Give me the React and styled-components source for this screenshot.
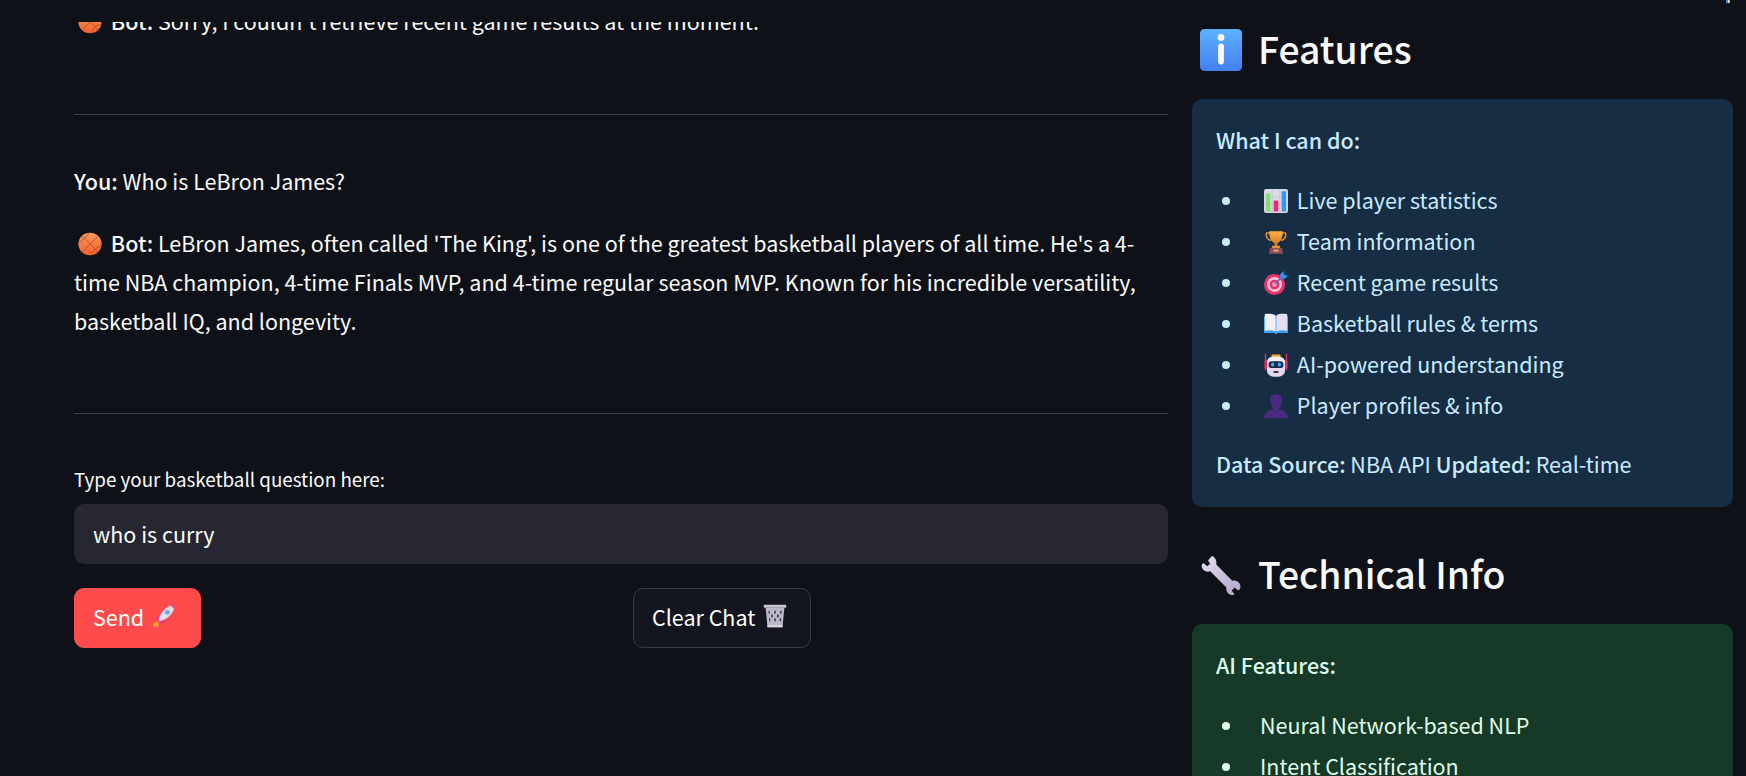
import React from "react";
import styled, { createGlobalStyle } from "styled-components";

const GlobalStyle = createGlobalStyle`
  html, body {
    margin: 0;
    height: 100%;
    overflow: hidden;
    background: #0e1117;
  }
  body {
    font-family: "Noto Sans CJK SC", "Noto Sans", sans-serif;
    color: #fafafa;
  }
`;

const Page = styled.div`
  position: relative;
  height: 776px;
  overflow: hidden;
  display: grid;
  grid-template-columns: 1094px 541px;
  column-gap: 24px;
  padding: 0 13px 0 74px;
  box-sizing: content-box;
  width: 1659px;
`;
const TopBar = styled.div`
  position: absolute;
  top: 0;
  left: 0;
  width: 1150px;
  height: 22px;
  background: #0e1117;
`;
const Decoration = styled.div`
  position: absolute;
  top: 0;
  left: 1726px;
  width: 4px;
  height: 3px;
  background: linear-gradient(90deg, #2f8fe0 0 50%, #fff0d0 50% 75%, #f2a63c 75%);
`;
const Main = styled.main`
  padding-top: 1px;
  display: flex;
  flex-direction: column;
`;
const Side = styled.aside`
  display: flex;
  flex-direction: column;
  padding-top: 20px;
`;
const Message = styled.p`
  margin: ${(p) => p.$top || 0}px 0 0;
  font-size: 21.5px;
  line-height: 39px;
  color: #fafafa;
  strong {
    font-weight: 500;
  }
`;
const Divider = styled.hr`
  width: 100%;
  height: 1px;
  border: 0;
  margin: ${(p) => p.$top}px 0 ${(p) => p.$bottom}px;
  background: #3d3f45;
`;
const Label = styled.label`
  display: block;
  font-size: 18.8px;
  line-height: 28px;
  margin-bottom: 11px;
  color: #fafafa;
`;
const Input = styled.input`
  display: block;
  width: 100%;
  box-sizing: border-box;
  height: 60px;
  padding: 0 19px 2px;
  border: 0;
  border-radius: 10px;
  outline: none;
  background: #262730;
  color: #fafafa;
  font: 21.5px "Noto Sans CJK SC", "Noto Sans", sans-serif;
`;
const ButtonRow = styled.div`
  display: grid;
  grid-template-columns: 1fr 1fr;
  column-gap: 24px;
  margin-top: 24px;
`;
const Button = styled.button`
  justify-self: start;
  display: inline-flex;
  align-items: center;
  gap: 8px;
  height: 60px;
  padding: 0 ${(p) => p.$right}px 4px 18px;
  border-radius: 10px;
  border: 1px solid ${(p) => (p.$primary ? "#ff4b4b" : "#393b43")};
  background: ${(p) => (p.$primary ? "#ff4b4b" : "#13161e")};
  color: #fff;
  font: 21.5px "Noto Sans CJK SC", "Noto Sans", sans-serif;
`;
const Heading = styled.h2`
  display: flex;
  align-items: center;
  gap: ${(p) => p.$gap}px;
  margin: 0 0 19px;
  height: 60px;
  padding-left: ${(p) => p.$pad}px;
  font-size: 37.3px;
  font-weight: 500;
  color: #fafafa;
`;
const HeadingText = styled.span`
  padding-bottom: 4px;
`;
const Panel = styled.section`
  box-sizing: border-box;
  border-radius: 10px;
  padding: 24px 24px 26px;
  margin-bottom: ${(p) => p.$bottom || 0}px;
  background: ${(p) => (p.$tone === "green" ? "#173928" : "#172d43")};
  color: ${(p) => (p.$tone === "green" ? "#dffde9" : "#c7ebff")};
  font-size: 21.5px;
  line-height: 34px;
  strong {
    font-weight: 500;
  }
`;
const PanelTitle = styled.div`
  font-weight: 500;
`;
const List = styled.ul`
  list-style: none;
  margin: 23.5px 0 20.5px;
  padding: 0 0 0 44px;
`;
const Item = styled.li`
  position: relative;
  height: 41px;
  line-height: 38px;
  &::before {
    content: "";
    position: absolute;
    left: -38px;
    top: 16px;
    width: 8px;
    height: 8px;
    border-radius: 50%;
    background: currentColor;
  }
`;
const Emoji = styled.svg`
  width: ${(p) => p.$size || 24}px;
  height: ${(p) => p.$size || 24}px;
  flex: none;
  vertical-align: ${(p) => p.$align || -4}px;
  margin: 0 ${(p) => p.$right || 0}px 0 ${(p) => p.$left || 0}px;
`;

const Icon = ({ children, ...rest }) => (
  <Emoji viewBox="0 0 32 32" aria-hidden="true" {...rest}>
    {children}
  </Emoji>
);

const Basketball = (props) => (
  <Icon {...props}>
    <defs>
      <linearGradient id="ball" x1="0" y1="0" x2="0" y2="1">
        <stop offset="0" stopColor="#f79a5c" />
        <stop offset="1" stopColor="#f4602a" />
      </linearGradient>
    </defs>
    <ellipse cx="16" cy="16" rx="15.5" ry="15" fill="url(#ball)" />
    <g fill="none" stroke="#a04c34" strokeWidth="1">
      <path d="M5 5.5C12 10 20 20 26.5 27" />
      <path d="M26.5 5C20 12 12 20 5.5 27" />
      <path d="M15 1C11 7 6 12 1.500 13" />
      <path d="M30.500 19C25 20 20 25 17 31" />
    </g>
  </Icon>
);

const InfoBox = (props) => (
  <Icon {...props}>
    <defs>
      <linearGradient id="info" x1="0" y1="0" x2="0" y2="1">
        <stop offset="0" stopColor="#5cb2ff" />
        <stop offset="1" stopColor="#437ff0" />
      </linearGradient>
    </defs>
    <rect x="0" y="0" width="32" height="32" rx="3.5" fill="url(#info)" />
    <circle cx="16" cy="6.5" r="2.6" fill="#fdf6ff" />
    <rect x="13.8" y="11" width="4.4" height="16" rx="2.2" fill="#fdf6ff" />
  </Icon>
);

const Wrench = (props) => (
  <Icon {...props}>
    <defs>
      <linearGradient id="wrench" x1="0" y1="0" x2="1" y2="1">
        <stop offset="0" stopColor="#e6dcf3" />
        <stop offset="1" stopColor="#b3a6c8" />
      </linearGradient>
    </defs>
    <path
      fill="url(#wrench)"
      d="M8.6 0.8 5.6 4.3 7.4 7 5 9 2.2 6.6C0.4 6.6 0.2 9.4 1.2 10.9 2.5 13 5.2 13.8 7.4 13L20.3 26C19.8 28.4 21 31 23.4 31.7 25 32.2 26.2 31.9 26.7 31.5L24.6 28.4 26.9 26 29.6 28.3C31.6 27.8 32 25 31.1 23.2 30 21 27.4 19.8 25 20.6L12.2 7.6C12.8 4.2 11 1.2 8.6 0.8Z"
    />
  </Icon>
);

const BarChart = (props) => (
  <Icon {...props}>
    <rect width="32" height="32" rx="3" fill="#dcdae6" />
    <path d="M11 0v32M21 0v32M0 11h32M0 21h32" stroke="#c3c0d0" strokeWidth="1" />
    <rect x="2.5" y="6" width="6" height="24" fill="#86e06f" />
    <rect x="13" y="15.5" width="6" height="14.5" fill="#f0286e" />
    <rect x="23.5" y="3" width="6" height="27" fill="#2f9af0" />
  </Icon>
);

const Trophy = (props) => (
  <Icon {...props}>
    <defs>
      <linearGradient id="cup" x1="0" y1="0" x2="0" y2="1">
        <stop offset="0" stopColor="#fbb23f" />
        <stop offset="1" stopColor="#d8701f" />
      </linearGradient>
    </defs>
    <path
      d="M8 4H3.5C2 9 4.5 13 9.5 14M24 4h4.5C30 9 27.5 13 22.5 14"
      fill="none"
      stroke="#e2912c"
      strokeWidth="2"
    />
    <path d="M7 1.5h18C25.5 9 23 15 18 17.5V22h-4v-4.5C9 15 6.5 9 7 1.5Z" fill="url(#cup)" />
    <rect x="10.5" y="21" width="11" height="3" rx="1" fill="#e0952e" />
    <path d="M8 24h16l1.5 7.5h-19Z" fill="#8c4a5c" />
    <rect x="12.5" y="26" width="7" height="3" fill="#d8a05a" />
  </Icon>
);

const Target = (props) => (
  <Icon {...props}>
    <circle cx="14" cy="18" r="14" fill="#ee2f6d" />
    <circle cx="14" cy="18" r="10" fill="#f7c4d6" />
    <circle cx="14" cy="18" r="6.5" fill="#ee2f6d" />
    <circle cx="14" cy="18" r="3" fill="#f7c4d6" />
    <path d="M14 18 25 7" stroke="#3477c4" strokeWidth="2" />
    <path d="M21 5 26 0l1 5 5 1-5 5-5-1Z" fill="#2f8fe0" />
  </Icon>
);

const Book = (props) => (
  <Icon {...props}>
    <path d="M0 6h32v22H18l-2 2-2-2H0Z" fill="#3aa0ee" />
    <path d="M1 3C6 2 12 2 15.5 4.5V26C11 24 6 24 1 25Z" fill="#f1eef7" />
    <path d="M31 3C26 2 20 2 16.5 4.5V26C21 24 26 24 31 25Z" fill="#e2deee" />
  </Icon>
);

const Robot = (props) => (
  <Icon {...props}>
    <path d="M2 1v22M30 1v22" stroke="#ee2f6d" strokeWidth="1.6" />
    <rect x="0.5" y="9" width="4" height="13" rx="2" fill="#d92c63" />
    <rect x="27.5" y="9" width="4" height="13" rx="2" fill="#d92c63" />
    <rect x="10" y="2" width="12" height="4" rx="1" fill="#f3a92f" />
    <rect x="4" y="5" width="24" height="26.5" rx="8" fill="#e6d8ec" />
    <path d="M4 13C4 8 8 5 12 5h8c4 0 8 3 8 8Z" fill="#f4eef6" />
    <rect x="6" y="11" width="20" height="9" rx="4.5" fill="#1f2a4a" />
    <rect x="9.5" y="13" width="4" height="5" rx="1.5" fill="#35b4f4" />
    <rect x="18.5" y="13" width="4" height="5" rx="1.5" fill="#35b4f4" />
    <rect x="12.5" y="24" width="7" height="2.6" rx="1.3" fill="#3b2f4a" />
  </Icon>
);

const Bust = (props) => (
  <Icon {...props}>
    <path
      d="M10 1.5C14 -0.5 22 0 23.5 5c.8 3 .8 7-.5 10-1 2-2 3-3 3.5v1.5c5 .8 11 3.5 12 12H0c1-8.500 7-11.200 12-12v-1.500C9 16 8 10 8 7c0-2.500.7-4.500 2-5.500Z"
      fill="#4b2a82"
    />
  </Icon>
);

const Rocket = (props) => (
  <Icon {...props}>
    <path d="M2 25 9 23 9 30 2 31Z" fill="#f39a3a" />
    <path d="M5 18 13 12 9 24Z" fill="#f0388a" />
    <path d="M14 27 20 19 8 23Z" fill="#f0388a" />
    <path d="M9 23C9 14 17 3 30 1c0 12-11 21-21 22Z" fill="#e4e0ea" />
    <path d="M25 2c2-.6 3.500-.9 5-1-.1 1.800-.5 3.500-1 5Z" fill="#ee2f6d" />
    <circle cx="20.500" cy="11" r="3.200" fill="#5aa9ee" stroke="#a9c6e8" strokeWidth="1" />
  </Icon>
);

const Trash = (props) => (
  <Icon {...props}>
    <rect x="1" y="1" width="30" height="4" rx="1" fill="#c9c5d4" />
    <path d="M3.500 5h25l-2.500 26H6Z" fill="#bdb9c9" />
    <g fill="#2b2a3a">
      <path d="M8 8l1.300 3-1 3-1-3ZM16 8l1.300 3-1.300 3-1.300-3ZM24 8l1 3-1 3-1.300-3ZM12 13l1.300 3-1.300 3-1.300-3ZM20 13l1.300 3-1.300 3-1.300-3ZM8.800 18l1.200 3-.8 3-1.200-3ZM16 18l1.300 3-1.300 3-1.300-3ZM23.200 18l1 3-1.200 3-1-3Z" />
    </g>
    <rect x="6" y="28" width="20" height="3" fill="#dcd9e4" />
  </Icon>
);

const features = [
  [BarChart, "Live player statistics"],
  [Trophy, "Team information"],
  [Target, "Recent game results"],
  [Book, "Basketball rules & terms"],
  [Robot, "AI-powered understanding"],
  [Bust, "Player profiles & info"],
];

export default function App() {
  return (
    <>
      <GlobalStyle />
      <Page>
        <Main>
          <Message>
            <Basketball $left={4} $right={4} /> <strong>Bot:</strong> Sorry, I couldn't retrieve recent game results at
            the moment.
          </Message>
          <Divider $top={74} $bottom={46} />
          <Message>
            <strong>You:</strong> Who is LeBron James?
          </Message>
          <Message $top={23}>
            <Basketball $left={4} $right={4} /> <strong>Bot:</strong> LeBron James, often called 'The King', is one of
            the greatest basketball players of all time. He's a 4-time NBA champion, 4-time Finals MVP, and 4-time
            regular season MVP. Known for his incredible versatility, basketball IQ, and longevity.
          </Message>
          <Divider $top={73} $bottom={51} />
          <Label htmlFor="question">Type your basketball question here:</Label>
          <Input id="question" defaultValue="who is curry" readOnly />
          <ButtonRow>
            <Button $primary $right={24}>
              Send <Rocket />
            </Button>
            <Button $right={23}>
              Clear Chat <Trash />
            </Button>
          </ButtonRow>
        </Main>
        <Side>
          <Heading $pad={8} $gap={16}>
            <InfoBox $size={42} />
            <HeadingText>Features</HeadingText>
          </Heading>
          <Panel $bottom={38}>
            <PanelTitle>What I can do:</PanelTitle>
            <List>
              {features.map(([Glyph, text]) => (
                <Item key={text}>
                  <Glyph $left={4} $right={4} /> {text}
                </Item>
              ))}
            </List>
            <div>
              <strong>Data Source:</strong> NBA API <strong>Updated:</strong> Real-time
            </div>
          </Panel>
          <Heading $pad={9} $gap={17}>
            <Wrench $size={40} />
            <HeadingText>Technical Info</HeadingText>
          </Heading>
          <Panel $tone="green">
            <PanelTitle>AI Features:</PanelTitle>
            <List>
              <Item>Neural Network-based NLP</Item>
              <Item>Intent Classification</Item>
              <Item>Context Understanding</Item>
            </List>
          </Panel>
        </Side>
        <TopBar />
        <Decoration />
      </Page>
    </>
  );
}
